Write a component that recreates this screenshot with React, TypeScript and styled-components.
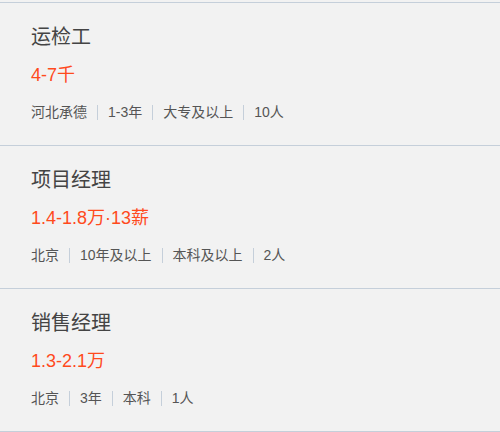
import styled, { createGlobalStyle } from 'styled-components';

interface Job {
    title: string,
    salary: string,
    tags: string[]
}

const jobs: Job[] = [
    { title: '运检工', salary: '4-7千', tags: ['河北承德', '1-3年', '大专及以上', '10人'] },
    { title: '项目经理', salary: '1.4-1.8万·13薪', tags: ['北京', '10年及以上', '本科及以上', '2人'] },
    { title: '销售经理', salary: '1.3-2.1万', tags: ['北京', '3年', '本科', '1人'] },
];

const GlobalStyle = createGlobalStyle`
    html, body {
        margin: 0;
        padding: 0;
        background: #f2f2f2;
    }
    body {
        font-family: 'Liberation Sans', 'Noto Sans CJK SC', sans-serif;
    }
`;

const App = () => {
    return(
        <>
            <GlobalStyle />
            <JobList>
                {jobs.map((job) => (
                    <JobItem key={job.title}>
                        <Title>{job.title}</Title>
                        <Salary>{job.salary}</Salary>
                        <Tags>
                            {job.tags.map((tag) => (
                                <Tag key={tag}>{tag}</Tag>
                            ))}
                        </Tags>
                    </JobItem>
                ))}
            </JobList>
        </>
    );
}

const JobList = styled.ul`
    list-style: none;
    margin: 2px 0 0;
    padding: 0;
    width: 500px;
`;

const JobItem = styled.li`
    border-top: 1px solid #c5cfda;
    padding: 20px 31px 23px;
    background: #f2f2f2;

    &:last-child {
        border-bottom: 1px solid #c5cfda;
    }
`;

const Title = styled.h3`
    margin: 0;
    font-size: 20px;
    line-height: 28px;
    font-weight: normal;
    color: #444;
`;

const Salary = styled.p`
    margin: 12px 0 0;
    font-size: 18px;
    line-height: 24px;
    color: #ff4a1d;
`;

const Tags = styled.div`
    display: flex;
    align-items: center;
    margin-top: 15px;
    height: 20px;
`;

const Tag = styled.span`
    font-size: 14px;
    line-height: 20px;
    color: #555;
    display: flex;
    align-items: center;

    & + &::before {
        content: '';
        display: block;
        width: 1px;
        height: 15px;
        background: #c5cfda;
        margin: 0 10px;
    }
`;

export default App;
